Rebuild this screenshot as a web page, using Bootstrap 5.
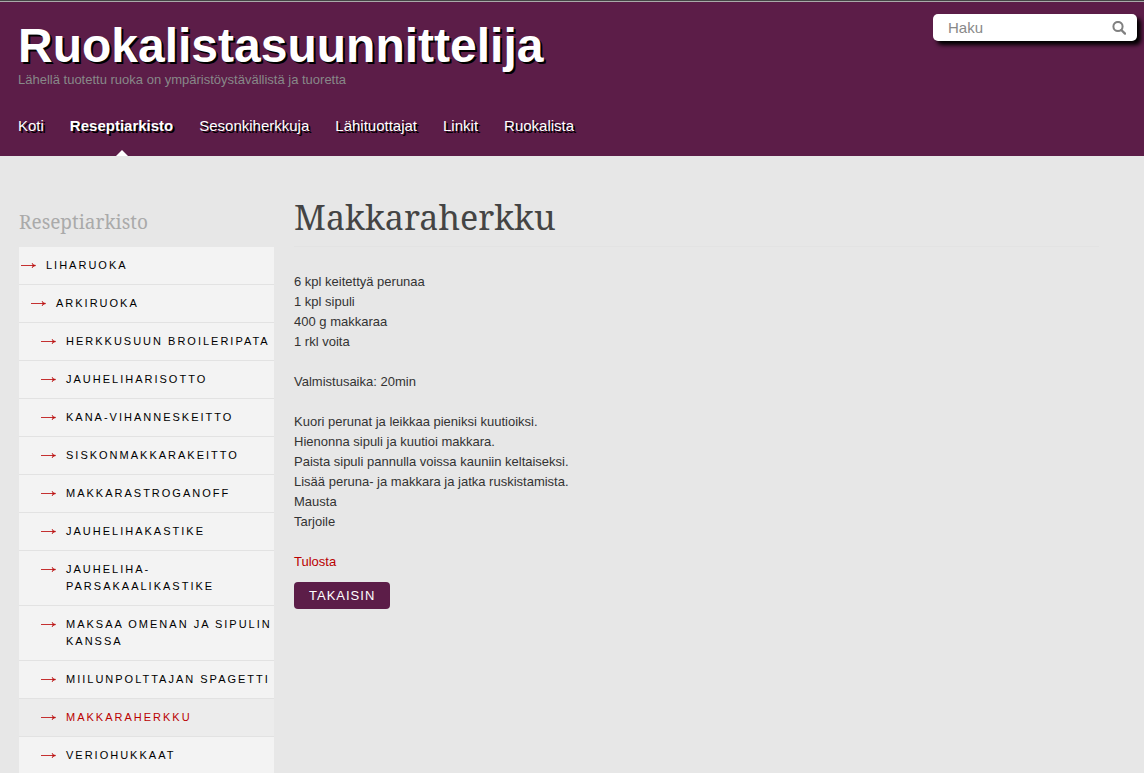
<!DOCTYPE html>
<html lang="fi">
<head>
<meta charset="utf-8">
<meta name="viewport" content="width=device-width, initial-scale=1">
<title>Makkaraherkku – Ruokalistasuunnittelija</title>
<link href="https://cdn.jsdelivr.net/npm/bootstrap@5.3.0/dist/css/bootstrap.min.css" rel="stylesheet">
<style>
  :root { --plum: #5c1d48; --red: #ba0000; }
  body { background: #e7e7e7; color: #333; font-family: "Liberation Sans", Arial, sans-serif; font-size: 13px; line-height: 20px; }
  .site-header { background: var(--plum); border-top: 1px solid #444; box-shadow: inset 0 1px #aaa; padding: 20px 7px 0 18px; }
  .site-title { font-size: 48px; font-weight: 700; line-height: 50px; text-shadow: 2px 2px #000; }
  .site-title a { color: #fff; }
  .tagline { color: #888; line-height: 18px; }
  .site-search { width: 204px; margin-top: -7px; border-radius: 5px; background: #fff; box-shadow: 4px 4px 4px #000; }
  .site-search input { height: 27px; padding: 0 0 0 15px; font-size: 15px; color: #555; background: transparent; }
  .site-search input::placeholder { color: #888; opacity: 1; }
  .site-search button { width: 36px; height: 27px; }
  .main-menu { column-gap: 26px; padding-top: 27px; }
  .main-menu .nav-link { position: relative; padding: 0 0 20px; font-size: 15px; color: #fff; text-shadow: 2px 2px #000; }
  .main-menu .active { font-weight: 700; }
  .main-menu .active::after { content: ""; position: absolute; left: 50%; bottom: 0; margin-left: -6px; border: 6px solid transparent; border-top: 0; border-bottom-color: #fff; }
  .page { padding: 40px 45px 40px 19px; column-gap: 20px; }
  .sidebar { flex: 0 0 255px; padding-top: 11px; }
  .sidebar h2, .recipe h1 { font-family: "Noto Serif", "Droid Serif", "DejaVu Serif", serif; font-weight: 400; }
  .sidebar h2 { font-size: 19px; line-height: 30px; margin: 0 0 10px; color: #aaa; }
  .tree a { display: flex; column-gap: 10px; padding: 10px 0 10px 2px; border-bottom: 1px solid #e2e2e2; background: #f3f3f3; color: #000; font-size: 11px; line-height: 17px; letter-spacing: 2px; text-transform: uppercase; }
  .tree .level-2 { padding-left: 12px; }
  .tree .level-3 { padding-left: 22px; }
  .tree .active { background: #ececec; color: var(--red); }
  .tree svg { flex: none; margin-top: 4px; }
  .recipe h1 { font-size: 34px; line-height: 42px; margin: 0 0 25px; padding-bottom: 8px; color: #444; border-bottom: 1px solid #e3e3e3; }
  .recipe p { margin: 0 0 20px; }
  .recipe .print { display: inline-block; margin-bottom: 10px; color: var(--red); }
  .btn-plum, .btn-plum:hover { height: 27px; padding: 0 15px; border: 0; border-radius: 4px; background: var(--plum); color: #fff; font-size: 13px; line-height: 27px; letter-spacing: 1px; text-transform: uppercase; }
</style>
</head>
<body>
<svg class="d-none" aria-hidden="true">
  <symbol id="arrow" viewBox="0 0 15 9"><path d="M0 4.500H13" fill="none" stroke="#c43030"/><path d="M11 2Q12.200 4 15 4.500Q12.200 5 11 7L12 4.500Z" fill="#ba1010" stroke="#ba1010" stroke-width=".4"/></symbol>
</svg>

<header class="site-header">
  <div class="d-flex justify-content-between align-items-start">
    <div>
      <div class="site-title"><a class="text-decoration-none" href="#">Ruokalistasuunnittelija</a></div>
      <div class="tagline">Lähellä tuotettu ruoka on ympäristöystävällistä ja tuoretta</div>
    </div>
    <form class="site-search d-flex" role="search">
      <input class="form-control border-0 shadow-none" type="text" placeholder="Haku" aria-label="Haku">
      <button class="btn p-0 border-0 d-flex align-items-center justify-content-center flex-shrink-0" type="button" aria-label="Hae">
        <svg width="14" height="14" viewBox="0 0 14 14" fill="none" stroke="#808080" stroke-width="2"><circle cx="6" cy="5.500" r="4.600"/><path d="M9.300 9L13 12.600" stroke-width="2.400" stroke-linecap="round"/></svg>
      </button>
    </form>
  </div>
  <nav aria-label="Päävalikko">
    <ul class="nav main-menu">
      <li><a class="nav-link" href="#">Koti</a></li>
      <li><a class="nav-link active" aria-current="page" href="#">Reseptiarkisto</a></li>
      <li><a class="nav-link" href="#">Sesonkiherkkuja</a></li>
      <li><a class="nav-link" href="#">Lähituottajat</a></li>
      <li><a class="nav-link" href="#">Linkit</a></li>
      <li><a class="nav-link" href="#">Ruokalista</a></li>
    </ul>
  </nav>
</header>

<div class="page d-flex">
  <aside class="sidebar">
    <h2>Reseptiarkisto</h2>
    <ul class="tree list-unstyled">
      <li><a class="text-decoration-none" href="#"><svg width="15" height="9"><use href="#arrow"/></svg><span>Liharuoka</span></a></li>
      <li><a class="text-decoration-none level-2" href="#"><svg width="15" height="9"><use href="#arrow"/></svg><span>Arkiruoka</span></a></li>
      <li><a class="text-decoration-none level-3" href="#"><svg width="15" height="9"><use href="#arrow"/></svg><span>Herkkusuun broileripata</span></a></li>
      <li><a class="text-decoration-none level-3" href="#"><svg width="15" height="9"><use href="#arrow"/></svg><span>Jauheliharisotto</span></a></li>
      <li><a class="text-decoration-none level-3" href="#"><svg width="15" height="9"><use href="#arrow"/></svg><span>Kana-vihanneskeitto</span></a></li>
      <li><a class="text-decoration-none level-3" href="#"><svg width="15" height="9"><use href="#arrow"/></svg><span>Siskonmakkarakeitto</span></a></li>
      <li><a class="text-decoration-none level-3" href="#"><svg width="15" height="9"><use href="#arrow"/></svg><span>Makkarastroganoff</span></a></li>
      <li><a class="text-decoration-none level-3" href="#"><svg width="15" height="9"><use href="#arrow"/></svg><span>Jauhelihakastike</span></a></li>
      <li><a class="text-decoration-none level-3" href="#"><svg width="15" height="9"><use href="#arrow"/></svg><span>Jauheliha-parsakaalikastike</span></a></li>
      <li><a class="text-decoration-none level-3" href="#"><svg width="15" height="9"><use href="#arrow"/></svg><span>Maksaa omenan ja sipulin kanssa</span></a></li>
      <li><a class="text-decoration-none level-3" href="#"><svg width="15" height="9"><use href="#arrow"/></svg><span>Miilunpolttajan spagetti</span></a></li>
      <li><a class="text-decoration-none level-3 active" aria-current="page" href="#"><svg width="15" height="9"><use href="#arrow"/></svg><span>Makkaraherkku</span></a></li>
      <li><a class="text-decoration-none level-3" href="#"><svg width="15" height="9"><use href="#arrow"/></svg><span>Veriohukkaat</span></a></li>
    </ul>
  </aside>
  <main class="recipe flex-grow-1">
    <h1>Makkaraherkku</h1>
    <p>6 kpl keitettyä perunaa<br>1 kpl sipuli<br>400 g makkaraa<br>1 rkl voita</p>
    <p>Valmistusaika: 20min</p>
    <p>Kuori perunat ja leikkaa pieniksi kuutioiksi.<br>Hienonna sipuli ja kuutioi makkara.<br>Paista sipuli pannulla voissa kauniin keltaiseksi.<br>Lisää peruna- ja makkara ja jatka ruskistamista.<br>Mausta<br>Tarjoile</p>
    <div><a class="print text-decoration-none" href="#">Tulosta</a></div>
    <button class="btn btn-plum" type="button">Takaisin</button>
  </main>
</div>
<script src="https://cdn.jsdelivr.net/npm/bootstrap@5.3.0/dist/js/bootstrap.bundle.min.js"></script>
</body>
</html>
